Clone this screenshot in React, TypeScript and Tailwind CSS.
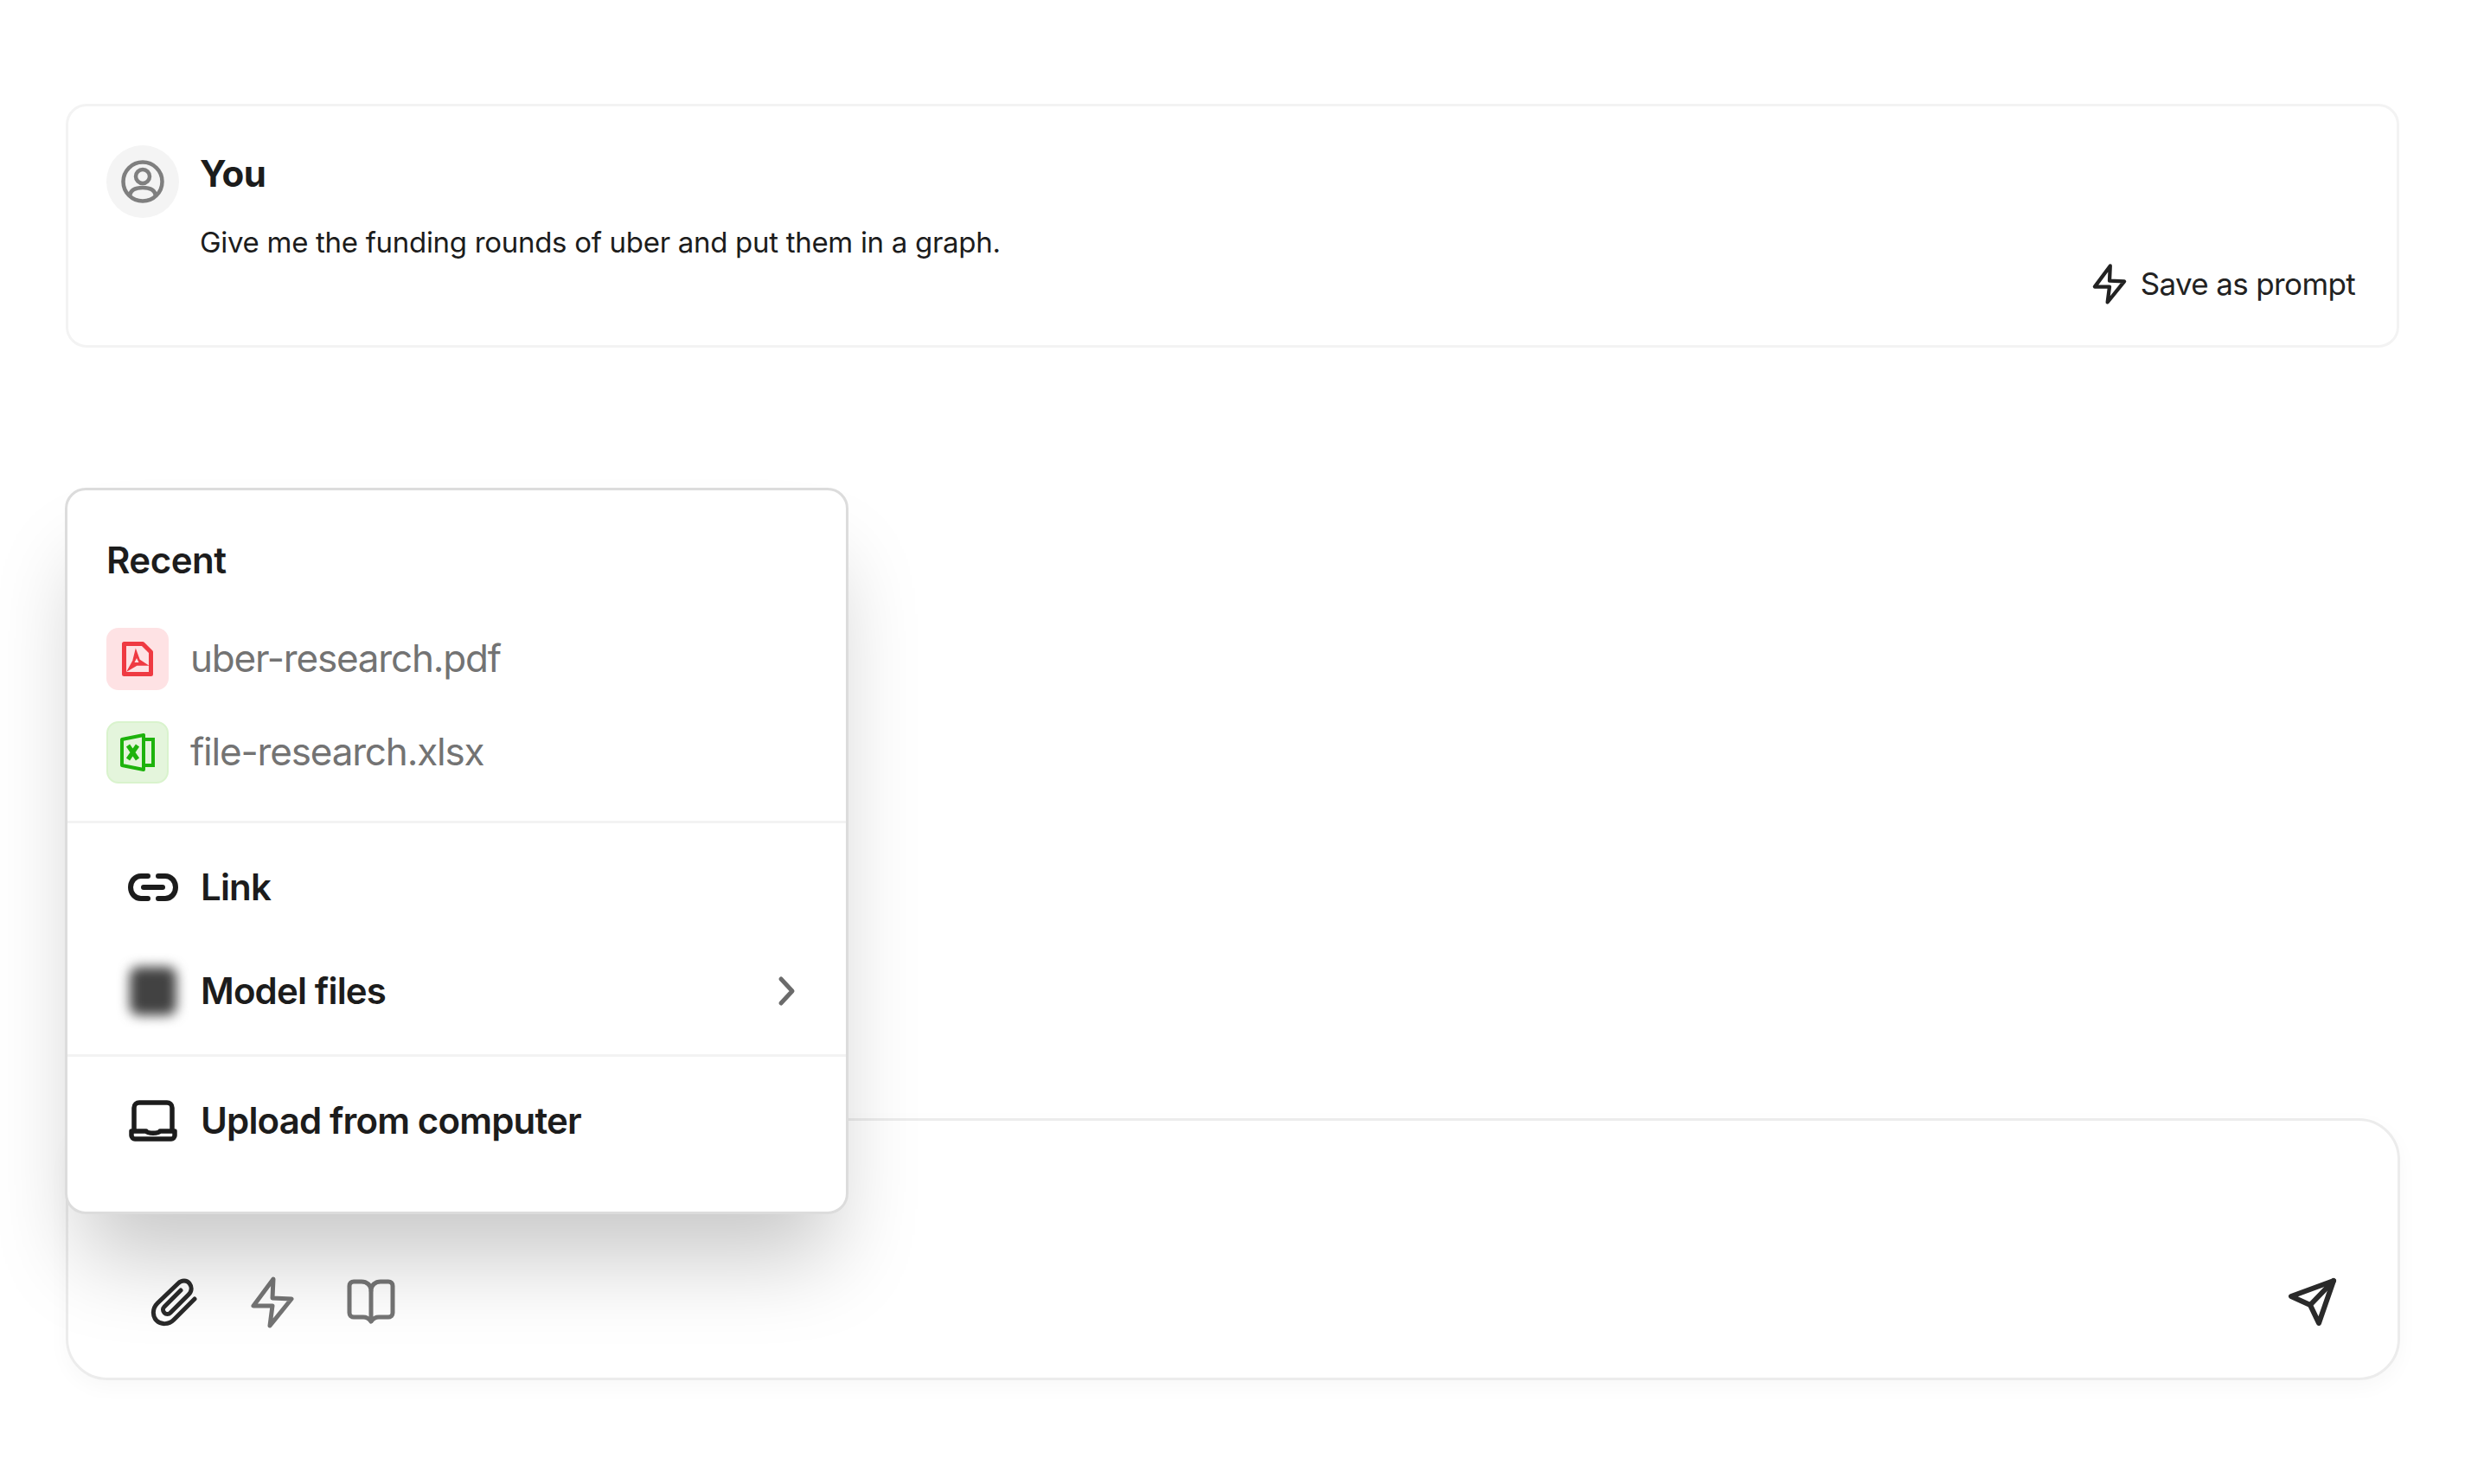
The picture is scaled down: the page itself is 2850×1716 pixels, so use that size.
import React from "react";

const BoltIcon = ({ className, stroke = 5 }: { className: string; stroke?: number }) => (
  <svg viewBox="0 0 54 60" fill="none" stroke="currentColor" strokeWidth={stroke} strokeLinejoin="round" strokeLinecap="round" className={className}>
    <path d="M28 3 L5 34 L27 34 L24 57 L49 26 L27 25 Z" />
  </svg>
);

const AvatarIcon = () => (
  <svg viewBox="0 0 50 50" fill="none" stroke="#7f7f7f" strokeWidth="4.5" className="w-[50px] h-[50px]">
    <circle cx="25" cy="25" r="22.5" />
    <circle cx="25" cy="19" r="8" />
    <path d="M10 41 C11 34 18 32 25 32 C32 32 39 34 40 41" />
  </svg>
);

const PdfIcon = () => (
  <svg viewBox="0 0 36 40" className="w-[36px] h-[40px]" fill="none" stroke="#ef3a42">
    <path d="M2.5 2.5 H24 L33.5 12 V37.5 H2.5 Z" strokeWidth="5" strokeLinejoin="round" />
    <path d="M16 10 L20 21 L29 27 L17 27 L7 33 L13 22 Z" fill="#ef3a42" strokeWidth="1.5" />
    <path d="M17 19 L19.5 24 L14.5 24 Z" fill="#fee2e4" stroke="none" />
  </svg>
);

const ExcelIcon = () => (
  <svg viewBox="0 0 40 44" className="w-[40px] h-[44px]" fill="none" stroke="#1db30c">
    <path d="M2 7 L27 2 V42 L2 37 Z" strokeWidth="4" strokeLinejoin="round" />
    <path d="M9 14 L20 30 M20 14 L9 30" strokeWidth="5" />
    <path d="M28 7 H38 V37 H28" strokeWidth="4" />
  </svg>
);

const LinkIcon = () => (
  <svg viewBox="0 0 60 36" fill="none" stroke="#1c1c1c" strokeWidth="6" strokeLinecap="round" className="w-[60px] h-[36px]">
    <path d="M24 5 H16 C9 5 4 11 4 18 C4 25 9 31 16 31 H24" />
    <path d="M36 5 H44 C51 5 56 11 56 18 C56 25 51 31 44 31 H36" />
    <path d="M19 18 H41" />
  </svg>
);

const LaptopIcon = () => (
  <svg viewBox="0 0 60 50" fill="none" stroke="#1c1c1c" strokeWidth="5.5" strokeLinejoin="round" className="w-[60px] h-[50px]">
    <path d="M8 37 V10 C8 6 11 4 14 4 H46 C49 4 52 6 52 10 V37" />
    <path d="M5 37 H22 C24 40 36 40 38 37 H55 V42 C55 44 53 46 51 46 H9 C7 46 5 44 5 42 Z" />
  </svg>
);

const ClipIcon = () => (
  <svg viewBox="0 0 58 60" fill="none" stroke="#2a2a2a" strokeWidth="5" strokeLinecap="round" className="w-[58px] h-[60px]">
    <path d="M53 26 L29 50 C23 56 14 56 9 51 C4 46 4 37 10 31 L34 8 C38 4 44 4 47 8 C50 12 50 17 46 21 L25 42 C23 44 20 44 18 42 C16 40 16 37 18 35 L37 16" />
  </svg>
);

const BookIcon = () => (
  <svg viewBox="0 0 58 56" fill="none" stroke="#757575" strokeWidth="5" strokeLinejoin="round" className="w-[58px] h-[56px]">
    <path d="M29 14 C29 8 24 4 18 4 H9 C6 4 4 6 4 9 V40 C4 43 6 45 9 45 H20 C24 45 27 47 29 50 C31 47 34 45 38 45 H49 C52 45 54 43 54 40 V9 C54 6 52 4 49 4 H40 C34 4 29 8 29 14 Z" />
    <path d="M29 14 V50" />
  </svg>
);

const SendIcon = () => (
  <svg viewBox="0 0 62 62" fill="none" stroke="#2a2a2a" strokeWidth="6" strokeLinejoin="round" strokeLinecap="round" className="w-[62px] h-[62px]">
    <path d="M56 7 L7 25 L29 35 L39 56 Z" />
    <path d="M29 35 L56 7" />
  </svg>
);

const ChevronIcon = () => (
  <svg viewBox="0 0 24 36" fill="none" stroke="#6b6b6b" strokeWidth="5" strokeLinecap="round" strokeLinejoin="round" className="w-[24px] h-[36px]">
    <path d="M6 4 L19 18 L6 32" />
  </svg>
);

const RecentRow = ({ icon, chip, name }: { icon: React.ReactNode; chip: string; name: string }) => (
  <div className="flex items-center gap-[25px]">
    <div className={`w-[72px] h-[72px] rounded-[14px] flex items-center justify-center ${chip}`}>{icon}</div>
    <span className="pb-[2px] text-[44px] leading-[56px] tracking-[-1.18px] text-[#737373]">{name}</span>
  </div>
);

const MenuRow = ({ icon, label, children }: { icon: React.ReactNode; label: string; children?: React.ReactNode }) => (
  <div className="h-[120px] flex items-center pl-[69px] pr-[57px]">
    <div className="w-[60px] flex justify-center">{icon}</div>
    <span className="ml-[25px] flex-1 text-[42px] leading-[56px] tracking-[-0.85px] font-semibold text-[#1c1c1c]">{label}</span>
    {children}
  </div>
);

const App = () => {
  return (
    <div className="relative w-[2850px] h-[1716px] bg-white overflow-hidden px-[76px] pt-[120px] [font-family:Inter,sans-serif]">
      <div className="h-[282px] border-[3px] border-[#f3f3f3] rounded-[24px] flex pt-[45px] pl-[44px] pr-[48px]">
        <div className="w-[84px] h-[84px] rounded-full bg-[#f4f4f4] flex items-center justify-center shrink-0">
          <AvatarIcon />
        </div>
        <div className="ml-[24px] flex-1 pt-[9px]">
          <div className="text-[42px] leading-[48px] tracking-[-0.5px] font-bold text-[#1c1c1c]">You</div>
          <div className="mt-[31px] text-[33px] leading-[48px] tracking-[-0.3px] text-[#1c1c1c]">Give me the funding rounds of uber and put them in a graph.</div>
          <div className="flex items-center justify-end gap-[15px] text-[#222222]">
            <BoltIcon className="w-[42px] h-[47px]" stroke={5.5} />
            <span className="text-[35px] leading-[48px] tracking-[-0.65px]">Save as prompt</span>
          </div>
        </div>
      </div>

      <div className="mt-[891px] -mr-[1px] h-[303px] border-[3px] border-[#ececec] rounded-[48px] shadow-[0_8px_24px_rgba(0,0,0,0.03)] flex items-end justify-between pl-[93px] pr-[68px] pb-[57px]">
        <div className="flex items-center gap-[58px]">
          <ClipIcon />
          <BoltIcon className="w-[54px] h-[60px] text-[#757575]" />
          <BookIcon />
        </div>
        <SendIcon />
      </div>

      <div className="absolute z-10 left-[75px] top-[564px] w-[906px] h-[840px] bg-white border-[3px] border-[#dcdcdc] rounded-[24px] shadow-[0_70px_100px_-20px_rgba(0,0,0,0.22)]">
        <div className="h-[382px] pt-[57px] pl-[45px]">
          <div className="text-[42px] leading-[48px] tracking-[-0.5px] font-semibold text-[#1c1c1c]">Recent</div>
          <div className="mt-[54px] flex flex-col gap-[36px]">
            <RecentRow icon={<PdfIcon />} chip="bg-[#fee2e4]" name="uber-research.pdf" />
            <RecentRow icon={<ExcelIcon />} chip="bg-[#e4f5dc] border-[2px] border-[#d9f3cd]" name="file-research.xlsx" />
          </div>
        </div>
        <div className="border-t-[3px] border-[#f3f3f3] pt-[14px] pb-[13px]">
          <MenuRow icon={<LinkIcon />} label="Link" />
          <MenuRow icon={<div className="w-[54px] h-[56px] rounded-[10px] bg-[#424242] blur-[7px]" />} label="Model files">
            <ChevronIcon />
          </MenuRow>
        </div>
        <div className="border-t-[3px] border-[#f3f3f3] pt-[14px]">
          <MenuRow icon={<LaptopIcon />} label="Upload from computer" />
        </div>
      </div>
    </div>
  );
};

export default App;
